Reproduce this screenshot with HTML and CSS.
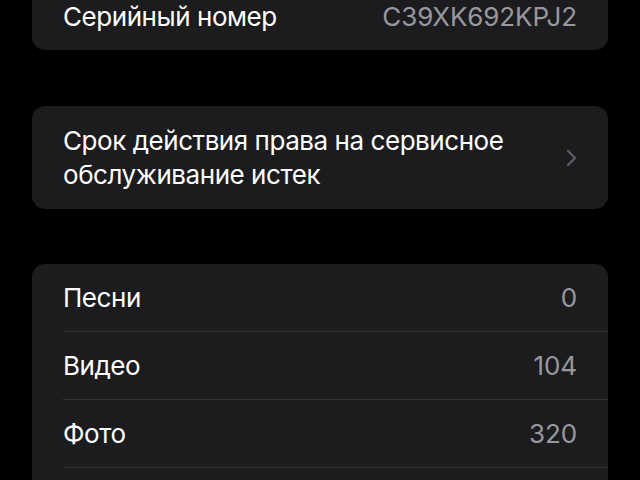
FILE: index.html
```html
<!DOCTYPE html>
<html lang="ru">
<head>
<meta charset="utf-8">
<link rel="stylesheet" href="styles.css">
</head>
<body>
<main class="page">
  <section class="card card-first">
    <div class="row">
      <span class="label">Серийный номер</span>
      <span class="value">C39XK692KPJ2</span>
    </div>
  </section>

  <section class="card card-service">
    <div class="row row-multi">
      <span class="label label-multi">Срок действия права на сервисное обслуживание истек</span>
      <svg class="chevron" width="11" height="18" viewBox="0 0 11 18" aria-hidden="true">
        <path d="M2 2 L9 9 L2 16" fill="none" stroke="#5c5c60" stroke-width="2.4" stroke-linecap="round" stroke-linejoin="round"/>
      </svg>
    </div>
  </section>

  <section class="card">
    <div class="row">
      <span class="label">Песни</span>
      <span class="value">0</span>
    </div>
    <div class="row">
      <span class="label">Видео</span>
      <span class="value">104</span>
    </div>
    <div class="row">
      <span class="label">Фото</span>
      <span class="value">320</span>
    </div>
    <div class="row row-empty"></div>
  </section>
</main>
</body>
</html>
```

FILE: styles.css
```css
html, body {
  margin: 0;
  padding: 0;
  background: #000;
  height: 100%;
  overflow: hidden;
}

body {
  font-family: Inter, "Noto Sans", "Liberation Sans", sans-serif;
  font-size: 26px;
  color: #fff;
}

.page {
  margin-top: -17px;
  padding: 0 32px;
  display: flex;
  flex-direction: column;
  gap: 55px;
}

.card {
  background: #1c1c1e;
  border-radius: 13px;
  overflow: hidden;
  padding-left: 31px;
}

.card-service {
  margin-top: 1px;
}

.row {
  display: flex;
  align-items: center;
  justify-content: space-between;
  min-height: 67px;
  padding-right: 31px;
  border-top: 1px solid #363639;
}

.row:first-child {
  border-top: none;
}

.row-multi {
  padding-top: 18px;
  padding-bottom: 17px;
  min-height: 0;
}

.label {
  letter-spacing: -0.45px;
}

.label-multi {
  line-height: 34px;
  max-width: 450px;
}

.value {
  color: #98989e;
  letter-spacing: -0.1px;
}

.chevron {
  display: block;
  flex: none;
}
```
